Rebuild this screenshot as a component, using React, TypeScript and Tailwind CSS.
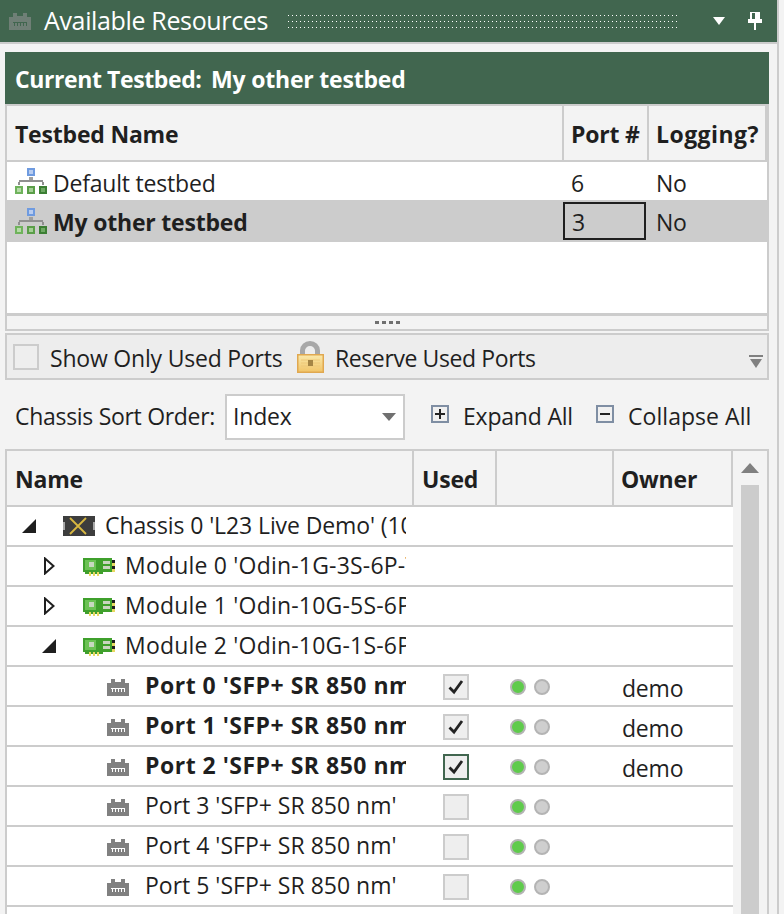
import React from "react";

const font = "font-['Open_Sans','Noto_Sans',sans-serif]";

function PortIcon({ color = "#808080", hole = "#ffffff" }: { color?: string; hole?: string }) {
  return (
    <svg viewBox="0 0 22 17" width="22" height="17" shapeRendering="crispEdges" className="shrink-0">
      <path fill={color} d="M0 4h4V0h4v3h6V0h4v4h4v13H0z" />
      <path fill={hole} d="M4 9h14v4h-1v-3h-2v3h-1v-3h-2v3h-1v-3H9v3H8v-3H6v3H5v-3H4z" />
    </svg>
  );
}

function TestbedIcon() {
  return (
    <svg viewBox="0 0 32 26" width="32" height="26" shapeRendering="crispEdges" className="shrink-0">
      <rect x="12" y="0" width="8" height="8" fill="#6f9be0" />
      <rect x="14" y="2" width="4" height="4" fill="#b9cdf0" />
      <rect x="14" y="9" width="4" height="3" fill="#a0a0a0" />
      <path fill="#909090" d="M4 12h24v2h1v3h-2v-3H5v3H3v-3h1z" />
      <rect x="0" y="18" width="8" height="8" fill="#6fb35c" />
      <rect x="2" y="20" width="4" height="4" fill="#b6dba8" />
      <rect x="12" y="18" width="8" height="8" fill="#5a9e48" />
      <rect x="14" y="20" width="4" height="4" fill="#a4cf96" />
      <rect x="24" y="18" width="8" height="8" fill="#3c7f34" />
      <rect x="26" y="20" width="4" height="4" fill="#6fa964" />
    </svg>
  );
}

function ChassisIcon() {
  return (
    <svg viewBox="0 0 32 20" width="32" height="20" shapeRendering="crispEdges" className="shrink-0">
      <rect width="32" height="20" fill="#3d3d3d" />
      <rect x="0" y="6" width="2" height="8" fill="#a8a8a8" />
      <rect x="30" y="6" width="2" height="8" fill="#a8a8a8" />
      <path d="M7 2l16 16M23 2L7 18" stroke="#d8b840" strokeWidth="1.8" fill="none" shapeRendering="auto" />
    </svg>
  );
}

function ModuleIcon() {
  return (
    <svg viewBox="0 0 32 18" width="32" height="18" shapeRendering="crispEdges" className="shrink-0">
      <rect x="0" y="0" width="29" height="14" fill="#3fa02c" />
      <rect x="2" y="14" width="18" height="2" fill="#3fa02c" />
      <rect x="2" y="2" width="11" height="10" fill="#6cc254" />
      <rect x="6" y="4" width="5" height="5" fill="#c8d8c0" />
      <rect x="20" y="3" width="7" height="3" fill="#c8d4c0" />
      <rect x="20" y="8" width="7" height="3" fill="#c8d4c0" />
      <rect x="29" y="2" width="3" height="3" fill="#1f1f1f" />
      <rect x="29" y="5" width="3" height="3" fill="#e8d860" />
      <rect x="29" y="8" width="3" height="3" fill="#1f1f1f" />
      <rect x="29" y="11" width="3" height="3" fill="#e8d860" />
      <rect x="6" y="14" width="2" height="4" fill="#e8d860" />
      <rect x="10" y="14" width="2" height="4" fill="#e8d860" />
      <rect x="14" y="14" width="2" height="4" fill="#e8d860" />
    </svg>
  );
}

function LockIcon() {
  return (
    <svg viewBox="0 0 30 32" width="30" height="32" className="shrink-0">
      <defs>
        <linearGradient id="lockBody" x1="0" y1="0" x2="0" y2="1">
          <stop offset="0" stopColor="#fae9ab" />
          <stop offset="1" stopColor="#f1c468" />
        </linearGradient>
      </defs>
      <path d="M7.5 14V9.5a7.5 7 0 0 1 15 0V14" fill="none" stroke="#a8a8a8" strokeWidth="5" />
      <rect x="2.75" y="13.75" width="25.5" height="17.5" fill="url(#lockBody)" stroke="#e0a850" strokeWidth="1.5" />
      <path d="M6 19h19M6 22h19M6 25h19" stroke="#eec878" strokeWidth="1" />
      <rect x="13" y="19" width="5" height="6" fill="#a58545" />
    </svg>
  );
}

function BoxIcon({ minus }: { minus?: boolean }) {
  return (
    <svg viewBox="0 0 18 18" width="18" height="18" shapeRendering="crispEdges" className="shrink-0">
      <rect x="1" y="1" width="16" height="16" fill="#f0f0f0" stroke="#7f8ea3" strokeWidth="2" />
      <rect x="4" y="8" width="10" height="2" fill="#222" />
      {!minus && <rect x="8" y="4" width="2" height="10" fill="#222" />}
    </svg>
  );
}

function Check() {
  return (
    <svg viewBox="0 0 22 22" width="22" height="22">
      <path d="M4.5 11.5l4.5 4.5 8-11" fill="none" stroke="#222" strokeWidth="2.8" />
    </svg>
  );
}

function CheckBox({ checked, focus }: { checked?: boolean; focus?: boolean }) {
  return (
    <div
      className={`mt-[1px] flex h-[26px] w-[26px] items-center justify-center border-2 bg-[#eeeeee] ${
        focus ? "border-[#41664f]" : "border-[#cccccc]"
      }`}
    >
      {checked && <Check />}
    </div>
  );
}

function Expander({ open }: { open?: boolean }) {
  return open ? (
    <svg viewBox="0 0 14 14" width="14" height="14" className="shrink-0">
      <path d="M14 0v14H0z" fill="#1f1f1f" />
    </svg>
  ) : (
    <svg viewBox="0 0 11 18" width="11" height="18" className="shrink-0">
      <path d="M1 1.5v15L9.5 9z" fill="#fff" stroke="#1f1f1f" strokeWidth="2" />
    </svg>
  );
}

function Led({ on }: { on?: boolean }) {
  return (
    <div
      className={`mt-[1px] h-4 w-4 rounded-full border-2 border-[#b4b4b4] ${on ? "bg-[#5fcb4c]" : "bg-[#cfcfcf]"}`}
    />
  );
}

const gripLine =
  "h-px bg-[repeating-linear-gradient(90deg,#ffffff_0,#ffffff_1px,transparent_1px,transparent_4px)]";

type Row = {
  kind: "chassis" | "module" | "port";
  open?: boolean;
  name: string;
  used?: boolean;
  bold?: boolean;
  focus?: boolean;
  owner?: string;
};

const rows: Row[] = [
  { kind: "chassis", open: true, name: "Chassis 0 'L23 Live Demo' (10" },
  { kind: "module", name: "Module 0 'Odin-1G-3S-6P-T" },
  { kind: "module", name: "Module 1 'Odin-10G-5S-6P" },
  { kind: "module", open: true, name: "Module 2 'Odin-10G-1S-6P" },
  { kind: "port", name: "Port 0 'SFP+ SR 850 nm'", used: true, bold: true, owner: "demo" },
  { kind: "port", name: "Port 1 'SFP+ SR 850 nm'", used: true, bold: true, owner: "demo" },
  { kind: "port", name: "Port 2 'SFP+ SR 850 nm'", used: true, bold: true, focus: true, owner: "demo" },
  { kind: "port", name: "Port 3 'SFP+ SR 850 nm'" },
  { kind: "port", name: "Port 4 'SFP+ SR 850 nm'" },
  { kind: "port", name: "Port 5 'SFP+ SR 850 nm'" },
];

function TreeRow({ row }: { row: Row }) {
  const spacing = row.bold
    ? "font-bold tracking-[0.5px]"
    : row.kind === "module"
      ? "tracking-[0.2px]"
      : row.kind === "port"
        ? "tracking-[0px]"
        : "tracking-[-0.1px]";
  return (
    <div className="flex h-[40px] shrink-0 items-center border-b-2 border-[#cccccc] bg-white">
      <div className="flex h-full w-[399px] shrink-0 items-center overflow-hidden whitespace-nowrap">
        {row.kind === "chassis" && (
          <div className="flex items-center pl-[15px]">
            <Expander open />
            <div className="ml-[27px] mr-[10px]">
              <ChassisIcon />
            </div>
          </div>
        )}
        {row.kind === "module" && (
          <div className="flex items-center pl-[35px]">
            <div className="flex w-[14px] justify-center">
              <Expander open={row.open} />
            </div>
            <div className="ml-[27px] mr-[10px] mt-[1px]">
              <ModuleIcon />
            </div>
          </div>
        )}
        {row.kind === "port" && (
          <div className="flex items-center pl-[100px] pr-[16px] pt-[2px]">
            <PortIcon />
          </div>
        )}
        <span className={`-mt-[2px] text-[23px] leading-none text-[#1f1f1f] ${spacing}`}>{row.name}</span>
      </div>
      <div className="flex h-full w-[90px] shrink-0 items-center pl-[37px]">
        {row.kind === "port" && <CheckBox checked={row.used} focus={row.focus} />}
      </div>
      <div className="flex h-full w-[125px] shrink-0 items-center gap-2 pl-[14px]">
        {row.kind === "port" && (
          <>
            <Led on />
            <Led />
          </>
        )}
      </div>
      <div className="flex-1 pl-[1px] pt-[4px] text-[23px] leading-none text-[#1f1f1f]">{row.owner}</div>
    </div>
  );
}

export default function App() {
  return (
    <div className={`h-[914px] w-[784px] overflow-hidden bg-[#f3f3f3] tracking-[-0.2px] text-[#1f1f1f] ${font}`}>
      <div className="flex h-[914px] w-[779px] flex-col border-r-2 border-[#cccccc]">
        {/* title bar */}
        <div className="flex h-[44px] shrink-0 items-center border-b-2 border-[#cccccc] bg-[#41664f] pl-[9px]">
          <PortIcon color="#6f7f76" hole="#41664f" />
          <span className="-mt-[2px] ml-[13px] w-[224px] shrink-0 whitespace-nowrap text-[25px] leading-none tracking-[-0.35px] text-white">
            Available Resources
          </span>
          <div className="ml-[20px] flex flex-1 flex-col gap-[5px]">
            <div className={gripLine} />
            <div className={gripLine} />
            <div className={gripLine} />
          </div>
          <div className="ml-[34px] flex items-center gap-[23px] pr-[15px]">
            <svg viewBox="0 0 12 8" width="12" height="8">
              <path d="M0 0h12L6 8z" fill="#fff" />
            </svg>
            <svg viewBox="0 0 14 18" width="14" height="18" shapeRendering="crispEdges">
              <path d="M2 0h10v7h2v4H8v7H6v-7H0V7h2z" fill="#fff" />
              <rect x="4" y="1" width="3" height="6" fill="#41664f" />
            </svg>
          </div>
        </div>

        <div className="flex flex-1 flex-col overflow-hidden pl-[5px] pr-[8px] pt-[8px]">
          {/* current testbed */}
          <div className="flex h-[52px] shrink-0 items-center whitespace-nowrap bg-[#41664f] pl-[10px] pt-[2px] text-[23px] font-bold leading-none text-white">
            <span className="w-[196px] shrink-0 tracking-[-0.4px]">Current Testbed:</span>
            <span>My other testbed</span>
          </div>

          {/* testbed table */}
          <div className="flex h-[212px] shrink-0 flex-col border-x-2 border-y-2 border-[#cccccc] border-b-[3px] bg-white">
            <div className="flex h-[56px] shrink-0 border-b-2 border-[#cccccc] bg-[#cccccc] pr-[2px] text-[23px] font-bold leading-none">
              <div className="flex w-[555px] items-center bg-[#f3f3f3] pl-[8px] pt-[3px]">Testbed Name</div>
              <div className="ml-[2px] flex w-[83px] items-center bg-[#f3f3f3] pl-[7px] pt-[3px]">Port #</div>
              <div className="ml-[2px] flex flex-1 items-center bg-[#f3f3f3] pl-[7px] pt-[3px] tracking-[0.45px]">Logging?</div>
            </div>
            <div className="flex h-[38px] shrink-0 items-center pt-[5px] text-[23px] leading-none">
              <div className="flex w-[555px] items-center gap-[6px] pl-[8px]">
                <div className="-mt-[5px]">
                  <TestbedIcon />
                </div>
                <span>Default testbed</span>
              </div>
              <div className="w-[85px] pl-[9px]">6</div>
              <div className="pl-[9px]">No</div>
            </div>
            <div className="flex h-[42px] shrink-0 items-center bg-[#cccccc] text-[23px] leading-none">
              <div className="flex w-[555px] items-center gap-[6px] pl-[8px] font-bold">
                <TestbedIcon />
                <span className="pt-[3px]">My other testbed</span>
              </div>
              <div className="ml-[1px] flex h-[38px] w-[83px] items-center border-2 border-[#1f1f1f] pl-[7px] pt-[3px]">3</div>
              <div className="ml-[1px] pl-[9px] pt-[3px]">No</div>
            </div>
          </div>

          {/* splitter */}
          <div className="flex h-[15px] shrink-0 items-center justify-center gap-[3px] border-x-2 border-b-2 border-[#cccccc] pb-[1px]">
            <div className="h-[3px] w-[4px] bg-[#707070]" />
            <div className="h-[3px] w-[4px] bg-[#707070]" />
            <div className="h-[3px] w-[4px] bg-[#707070]" />
            <div className="h-[3px] w-[4px] bg-[#707070]" />
          </div>

          {/* toolbar */}
          <div className="mt-[2px] flex h-[47px] shrink-0 items-center whitespace-nowrap border-2 border-[#cccccc] bg-[#ededed] pl-[6px] text-[23px] leading-none">
            <div className="h-[26px] w-[26px] shrink-0 border-2 border-[#cccccc] bg-[#eeeeee]" />
            <span className="ml-[11px] w-[232px] shrink-0 pt-[4px] tracking-[-0.2px]">Show Only Used Ports</span>
            <div className="ml-[13px]">
              <LockIcon />
            </div>
            <span className="ml-[10px] pt-[4px] tracking-[-0.4px]">Reserve Used Ports</span>
            <svg viewBox="0 0 14 14" width="14" height="14" className="ml-auto mr-[4px] mt-[10px]">
              <rect x="0" y="0" width="14" height="2" fill="#808080" />
              <path d="M1 4h12l-6 9z" fill="#808080" />
            </svg>
          </div>

          {/* sort row */}
          <div className="flex h-[69px] shrink-0 items-center whitespace-nowrap pl-[10px] pt-[4px] text-[23px] leading-none">
            <span className="w-[210px] shrink-0 tracking-[-0.3px]">Chassis Sort Order:</span>
            <div className="flex h-[46px] w-[180px] shrink-0 items-center justify-between border-2 border-[#cccccc] bg-white pl-[6px] pr-[7px]">
              <span>Index</span>
              <svg viewBox="0 0 14 8" width="14" height="8">
                <path d="M0 0h14L7 8z" fill="#707070" />
              </svg>
            </div>
            <div className="ml-[26px] -mt-[6px]">
              <BoxIcon />
            </div>
            <span className="ml-[14px] w-[111px] shrink-0">Expand All</span>
            <div className="ml-[22px] -mt-[6px]">
              <BoxIcon minus />
            </div>
            <span className="ml-[14px] tracking-[0.05px]">Collapse All</span>
          </div>

          {/* tree grid */}
          <div className="flex flex-1 overflow-hidden border-x-2 border-t-2 border-[#cccccc]">
            <div className="flex w-[726px] shrink-0 flex-col">
              <div className="flex h-[56px] shrink-0 border-b-2 border-[#cccccc] text-[23px] font-bold leading-none">
                <div className="flex w-[407px] shrink-0 items-center border-r-2 border-[#cccccc] pl-[8px] pt-[3px]">Name</div>
                <div className="flex w-[83px] shrink-0 items-center border-r-2 border-[#cccccc] pl-[8px] pt-[3px]">Used</div>
                <div className="w-[117px] shrink-0 border-r-2 border-[#cccccc]" />
                <div className="flex flex-1 items-center border-r-2 border-[#cccccc] pl-[7px] pt-[3px]">Owner</div>
              </div>
              {rows.map((r) => (
                <TreeRow key={r.name} row={r} />
              ))}
              <div className="flex-1 bg-white" />
            </div>
            <div className="flex flex-1 flex-col pl-[8px] pr-[8px] pt-[12px]">
              <svg viewBox="0 0 18 10" width="18" height="10" className="shrink-0">
                <path d="M9 0l9 10H0z" fill="#808080" />
              </svg>
              <div className="mt-[12px] flex-1 bg-[#cccccc]" />
            </div>
          </div>
        </div>
      </div>
    </div>
  );
}
